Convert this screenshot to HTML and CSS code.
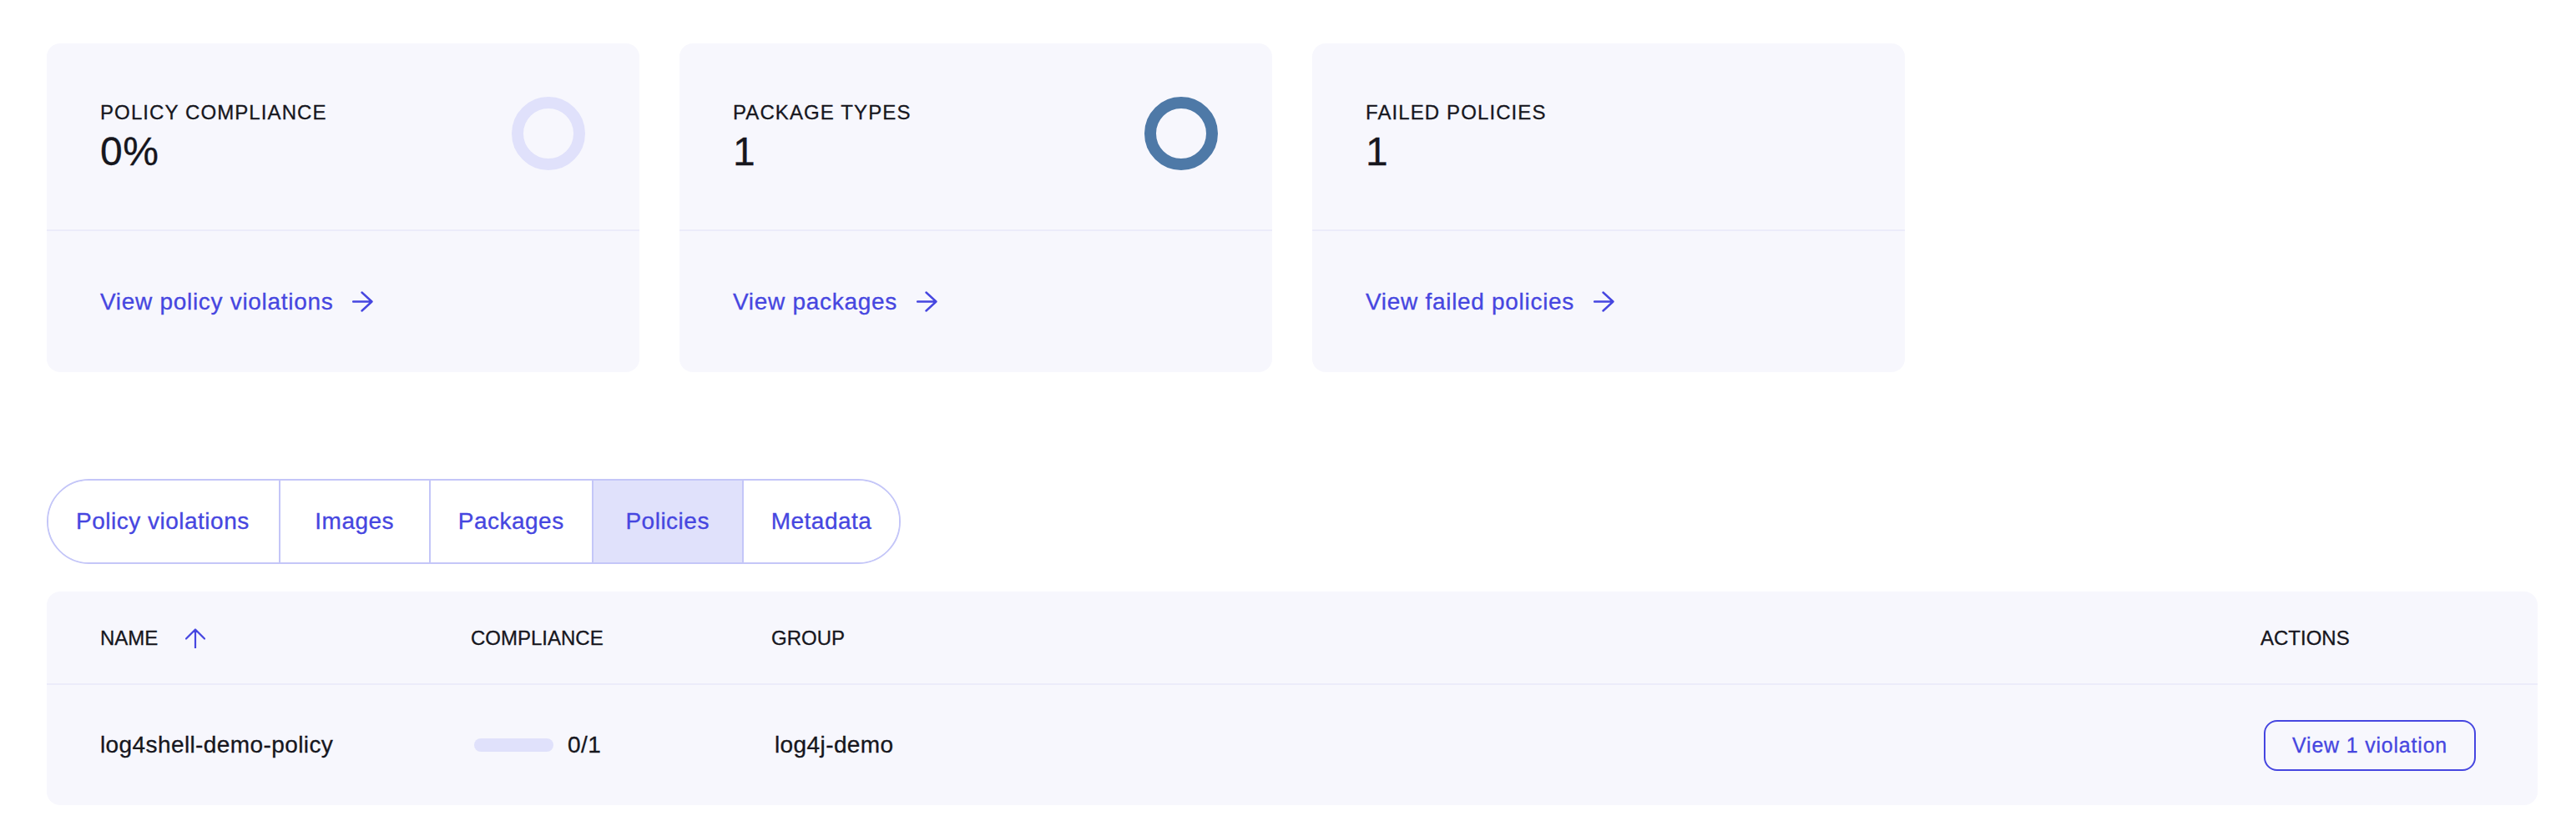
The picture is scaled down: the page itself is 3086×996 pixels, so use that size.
FILE: index.html
```html
<!DOCTYPE html>
<html lang="en">
<head>
<meta charset="utf-8">
<title>Policies</title>
<link rel="stylesheet" href="styles.css">
</head>
<body>
<main class="page">
  <section class="cards">
    <div class="card">
      <div class="card-top">
        <div class="card-stat">
          <div class="card-label">POLICY COMPLIANCE</div>
          <div class="card-value">0%</div>
        </div>
        <svg class="ring" viewBox="0 0 88 88" width="88" height="88"><circle cx="44" cy="44" r="37" fill="none" stroke="#e0e1fb" stroke-width="14"/></svg>
      </div>
      <div class="card-bottom">
        <a class="card-link" href="#">View policy violations</a>
        <svg class="link-arrow" viewBox="0 0 25 25" width="25" height="25"><path d="M1 12.5H23.5M11.5 1.5L23.5 12.5L11.5 23.5" fill="none" stroke="#4646e0" stroke-width="2.4" stroke-linecap="round" stroke-linejoin="round"/></svg>
      </div>
    </div>
    <div class="card">
      <div class="card-top">
        <div class="card-stat">
          <div class="card-label">PACKAGE TYPES</div>
          <div class="card-value">1</div>
        </div>
        <svg class="ring" viewBox="0 0 88 88" width="88" height="88"><circle cx="44" cy="44" r="37" fill="none" stroke="#4e79a7" stroke-width="14"/></svg>
      </div>
      <div class="card-bottom">
        <a class="card-link" href="#">View packages</a>
        <svg class="link-arrow" viewBox="0 0 25 25" width="25" height="25"><path d="M1 12.5H23.5M11.5 1.5L23.5 12.5L11.5 23.5" fill="none" stroke="#4646e0" stroke-width="2.4" stroke-linecap="round" stroke-linejoin="round"/></svg>
      </div>
    </div>
    <div class="card">
      <div class="card-top">
        <div class="card-stat">
          <div class="card-label">FAILED POLICIES</div>
          <div class="card-value">1</div>
        </div>
      </div>
      <div class="card-bottom">
        <a class="card-link" href="#">View failed policies</a>
        <svg class="link-arrow" viewBox="0 0 25 25" width="25" height="25"><path d="M1 12.5H23.5M11.5 1.5L23.5 12.5L11.5 23.5" fill="none" stroke="#4646e0" stroke-width="2.4" stroke-linecap="round" stroke-linejoin="round"/></svg>
      </div>
    </div>
  </section>

  <nav class="tabs">
    <a class="tab" href="#">Policy violations</a>
    <a class="tab" href="#">Images</a>
    <a class="tab" href="#">Packages</a>
    <a class="tab tab-active" href="#">Policies</a>
    <a class="tab" href="#">Metadata</a>
  </nav>

  <section class="table">
    <div class="table-head">
      <div class="th th-sort">NAME
        <svg class="sort-arrow" viewBox="0 0 24 24" width="24" height="24"><path d="M12 23.5V1.5M1 12.5L12 1.5L23 12.5" fill="none" stroke="#4646e0" stroke-width="2.2" stroke-linecap="round" stroke-linejoin="round"/></svg>
      </div>
      <div class="th">COMPLIANCE</div>
      <div class="th">GROUP</div>
      <div class="th">ACTIONS</div>
    </div>
    <div class="table-row">
      <div class="td">log4shell-demo-policy</div>
      <div class="td td-compliance"><span class="bar"></span><span>0/1</span></div>
      <div class="td">log4j-demo</div>
      <div class="td"><button class="btn-outline" type="button">View 1 violation</button></div>
    </div>
  </section>
</main>
</body>
</html>
```
FILE: styles.css
```css
* { box-sizing: border-box; }

html, body {
  margin: 0;
  background: #ffffff;
}

body {
  font-family: "Liberation Sans", Arial, sans-serif;
  color: #16161d;
  -webkit-text-stroke: 0.3px currentColor;
}

.page {
  width: 2984px;
  margin-left: 56px;
  padding-top: 52px;
}

.cards {
  display: grid;
  grid-template-columns: repeat(4, 710px);
  column-gap: 48px;
}

.card {
  background: #f7f7fd;
  border-radius: 16px;
  display: flex;
  flex-direction: column;
}

.card-top {
  display: flex;
  justify-content: space-between;
  align-items: flex-start;
  padding: 64px 65px 65px 64px;
  border-bottom: 2px solid #ececfa;
}

.card-label {
  font-size: 24px;
  line-height: 38px;
  letter-spacing: 1.1px;
}

.card-value {
  font-size: 48px;
  line-height: 56px;
  letter-spacing: 0.5px;
}

.ring { display: block; }

.card-bottom {
  height: 169px;
  display: flex;
  align-items: center;
  gap: 23px;
  padding: 0 64px;
}

.card-link {
  font-size: 28px;
  letter-spacing: 0.7px;
  color: #4646e0;
  text-decoration: none;
}

.link-arrow { display: block; }

.tabs {
  display: inline-flex;
  margin-top: 128px;
  height: 102px;
  border: 2px solid #c4c6f8;
  border-radius: 51px;
  overflow: hidden;
}

.tab {
  display: flex;
  align-items: center;
  justify-content: center;
  min-width: 180px;
  padding: 0 33px;
  font-size: 28px;
  letter-spacing: 0.5px;
  color: #4646e0;
  text-decoration: none;
  border-left: 2px solid #c4c6f8;
  background: #ffffff;
}

.tab:first-child {
  border-left: none;
  padding-left: 33px;
  padding-right: 35px;
}

.tab-active {
  background: #e0e1fb;
}

.table {
  margin-top: 33px;
  background: #f7f7fd;
  border-radius: 16px;
}

.table-head,
.table-row {
  display: grid;
  grid-template-columns: 444px 360px 1784px 1fr;
  padding-left: 64px;
  align-items: center;
}

.table-head {
  height: 112px;
  border-bottom: 2px solid #ececfa;
}

.table-row {
  height: 144px;
}

.th {
  font-size: 24px;
  display: flex;
  align-items: center;
  padding-top: 2px;
}

.th-sort .sort-arrow {
  margin-left: 33px;
  display: block;
}

.td {
  font-size: 28px;
  letter-spacing: 0.4px;
}

.td + .td {
  padding-left: 4px;
}

.td-compliance {
  display: flex;
  align-items: center;
  gap: 17px;
}

.bar {
  display: block;
  width: 95px;
  height: 16px;
  border-radius: 8px;
  background: #e0e1fb;
}

.btn-outline {
  font-family: "Liberation Sans", Arial, sans-serif;
  font-size: 25px;
  letter-spacing: 0.8px;
  color: #4646e0;
  -webkit-text-stroke: 0.3px #4646e0;
  background: transparent;
  border: 2px solid #4646e0;
  border-radius: 16px;
  height: 61px;
  padding: 0 32px;
  cursor: pointer;
}
```
